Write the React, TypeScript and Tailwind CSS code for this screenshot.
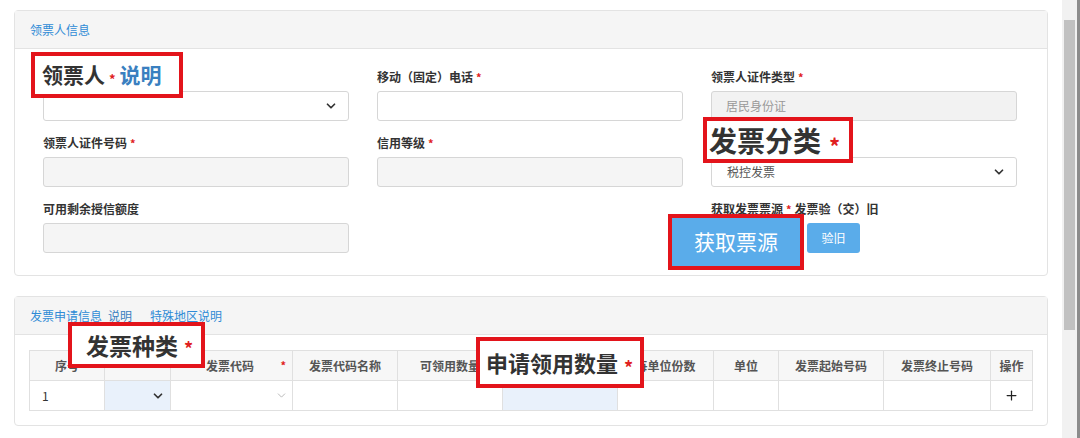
import { ChevronDown, Plus } from "lucide-react"
import type { ReactNode } from "react"

function Star({ className = "" }: { className?: string }) {
  return <span className={`ml-[3px] text-[11px] text-[#e02020] align-[-3px] ${className}`}>*</span>
}

// label text may be left out where an annotation box lies over it
function Field({ label, required, children }: { label?: ReactNode; required?: boolean; children?: ReactNode }) {
  return (
    <div>
      <div className="mb-1 flex h-5 items-center text-[12px] font-bold text-[#333]">
        {label && <span>{label}</span>}
        {label && required && <Star />}
      </div>
      {children}
    </div>
  )
}

function Box({ className = "", children }: { className?: string; children?: ReactNode }) {
  return <div className={`h-[30px] rounded-[3px] border border-[#d6d6d6] ${className}`}>{children}</div>
}

function SelectBox({ value, className = "" }: { value?: string; className?: string }) {
  return (
    <Box className={`flex items-center justify-between bg-white px-[15px] ${className}`}>
      <span className="text-[12px] text-[#555]">{value}</span>
      <ChevronDown size={14} strokeWidth={3} className="-mr-[5px] text-[#333]" />
    </Box>
  )
}

const cols = ["w-[75px]", "w-[66px]", "w-[122px]", "w-[105px]", "w-[105px]", "w-[115px]", "w-[96px]", "w-[65px]", "w-[105px]", "w-[107px]", "w-[42px]"]

export default function App() {
  return (
    <div className="relative flex h-[438px] w-[1080px] overflow-hidden bg-white font-['Noto_Sans_CJK_SC','Noto_Sans',sans-serif]">
      <div className="w-[1062px] pl-[14px] pt-[10px]">
        {/* 领票人信息 */}
        <div className="w-[1034px] rounded-[4px] border border-[#e3e3e3]">
          <div className="flex h-[38px] items-center border-b border-[#e3e3e3] bg-[#f5f5f5] px-[15px] text-[12px] text-[#2f8bd6]">
            领票人信息
          </div>
          <div className="grid grid-cols-[306px_306px_306px] gap-x-[28px] gap-y-[12px] px-[28px] pt-[18px] pb-[22px]">
            <Field>
              <SelectBox />
            </Field>
            <Field label="移动（固定）电话" required>
              <Box className="bg-white" />
            </Field>
            <Field label="领票人证件类型" required>
              <Box className="flex items-center bg-[#f2f2f2] px-[14px] text-[12px] text-[#999]">居民身份证</Box>
            </Field>
            <Field label="领票人证件号码" required>
              <Box className="bg-[#f5f5f5]" />
            </Field>
            <Field label="信用等级" required>
              <Box className="bg-[#f5f5f5]" />
            </Field>
            <Field>
              <SelectBox value="税控发票" />
            </Field>
            <Field label="可用剩余授信额度">
              <Box className="bg-[#f5f5f5]" />
            </Field>
            <div />
            <div>
              <div className="mb-1 flex h-5 items-center text-[12px] font-bold text-[#333]">
                <span>获取发票票源</span>
                <Star className="mr-[3px]" />
                <span>发票验（交）旧</span>
              </div>
              <div className="flex gap-[8px]">
                <div className="h-[30px] w-[88px] rounded-[3px] bg-[#5aacea]" />
                <button className="h-[30px] w-[53px] rounded-[3px] bg-[#5aacea] text-[12px] text-white">验旧</button>
              </div>
            </div>
          </div>
        </div>

        {/* 发票申请信息 */}
        <div className="mt-[20px] w-[1034px] rounded-[4px] border border-[#e3e3e3]">
          <div className="flex h-[38px] items-center gap-[6px] border-b border-[#e3e3e3] bg-[#f5f5f5] px-[15px] text-[12px] text-[#2f8bd6]">
            <span>发票申请信息</span>
            <span className="mr-[12px] text-[#3a7fc0]">说明</span>
            <span>特殊地区说明</span>
          </div>
          <div className="px-[14px] pt-[15px] pb-[14px]">
            <table className="w-[1003px] table-fixed border-collapse text-[12px]">
              <colgroup>
                {cols.map((c, i) => (
                  <col key={i} className={c} />
                ))}
              </colgroup>
              <thead>
                <tr className="h-[30px] bg-[#f7f7f7] font-bold text-[#555]">
                  <th className="border border-[#e0e0e0]">序号</th>
                  <th className="border border-[#e0e0e0]" />
                  <th className="border border-[#e0e0e0]">
                    <div className="flex items-center justify-between pl-[35px] pr-[6px]">
                      <span>发票代码</span>
                      <Star />
                    </div>
                  </th>
                  <th className="border border-[#e0e0e0]">发票代码名称</th>
                  <th className="border border-[#e0e0e0]">可领用数量</th>
                  <th className="border border-[#e0e0e0]" />
                  <th className="border border-[#e0e0e0]">每单位份数</th>
                  <th className="border border-[#e0e0e0]">单位</th>
                  <th className="border border-[#e0e0e0]">发票起始号码</th>
                  <th className="border border-[#e0e0e0]">发票终止号码</th>
                  <th className="border border-[#e0e0e0]">操作</th>
                </tr>
              </thead>
              <tbody>
                <tr className="h-[30px] text-[#333]">
                  <td className="border border-[#e0e0e0] pl-[12px]">1</td>
                  <td className="border border-[#e0e0e0] bg-[#e9f1fb]">
                    <div className="flex justify-end pr-[5px]">
                      <ChevronDown size={14} strokeWidth={3} className="text-[#333]" />
                    </div>
                  </td>
                  <td className="border border-[#e0e0e0]">
                    <div className="flex justify-end pr-[4px]">
                      <ChevronDown size={13} strokeWidth={1.5} className="text-[#aaa]" />
                    </div>
                  </td>
                  <td className="border border-[#e0e0e0]" />
                  <td className="border border-[#e0e0e0]" />
                  <td className="border border-[#e0e0e0] bg-[#e9f1fb]" />
                  <td className="border border-[#e0e0e0]" />
                  <td className="border border-[#e0e0e0]" />
                  <td className="border border-[#e0e0e0]" />
                  <td className="border border-[#e0e0e0]" />
                  <td className="border border-[#e0e0e0]">
                    <div className="flex justify-center">
                      <Plus size={15} strokeWidth={2} className="text-[#222]" />
                    </div>
                  </td>
                </tr>
              </tbody>
            </table>
          </div>
        </div>
      </div>

      {/* scrollbar */}
      <div className="flex h-[438px] w-[18px]">
        <div className="w-[15px] bg-[#f1f1f1] pt-[20px]">
          <div className="mx-[2px] h-[310px] bg-[#c1c1c1]" />
        </div>
        <div className="w-[3px] bg-[#8c8c8c]" />
      </div>

      {/* red annotation boxes */}
      <div className="absolute left-[31px] top-[52px] flex h-[46px] w-[152px] items-center border-4 border-[#e3141b] bg-white pl-[7px] text-[21px] font-bold">
        <span className="text-[#333]">领票人</span>
        <span className="mx-[4px] mt-[8px] text-[13px] text-[#e02020]">*</span>
        <span className="text-[#3a7fc0]">说明</span>
      </div>
      <div className="absolute left-[703px] top-[117px] flex h-[46px] w-[150px] items-center border-4 border-[#e3141b] bg-white pl-[2px] text-[28px] font-bold text-[#333]">
        <span>发票分类</span>
        <span className="ml-[8px] mt-[10px] text-[22px] text-[#e02020]">*</span>
      </div>
      <div className="absolute left-[668px] top-[214px] h-[56px] w-[136px] border-4 border-[#e3141b]">
        <div className="flex h-full w-full items-center justify-center bg-[#5aacea] text-[21px] text-white">获取票源</div>
      </div>
      <div className="absolute left-[68px] top-[322px] flex h-[46px] w-[137px] items-center border-4 border-[#e3141b] bg-white pl-[14px] text-[23px] font-bold text-[#333]">
        <span>发票种类</span>
        <span className="ml-[6px] mt-[6px] text-[18px] text-[#e02020]">*</span>
      </div>
      <div className="absolute left-[476px] top-[337px] flex h-[51px] w-[168px] items-center border-4 border-[#e3141b] bg-white pl-[6px] text-[22px] font-bold text-[#333]">
        <span>申请领用数量</span>
        <span className="ml-[6px] mt-[10px] text-[18px] text-[#e02020]">*</span>
      </div>
    </div>
  )
}
